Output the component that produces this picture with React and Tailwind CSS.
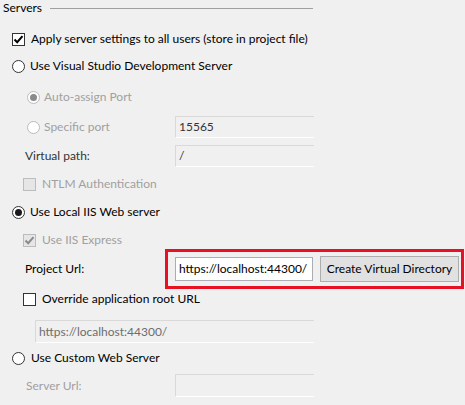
const font = { fontFamily: 'Lato, "Noto Sans", sans-serif' };

function Radio({ checked, disabled }) {
  return (
    <span
      className={`flex h-[13px] w-[13px] shrink-0 items-center justify-center rounded-full border bg-white ${
        disabled ? 'border-[#bcbcbc] bg-[#f0f0f0]' : 'border-[#333333]'
      }`}
    >
      {checked && (
        <span className={`h-[7px] w-[7px] rounded-full ${disabled ? 'bg-[#8a8a8a]' : 'bg-[#1a1a1a]'}`} />
      )}
    </span>
  );
}

function Check({ checked, disabled }) {
  return (
    <span
      className={`flex h-[13px] w-[13px] shrink-0 items-center justify-center border ${
        disabled ? 'border-[#bcbcbc] bg-[#e6e6e6]' : 'border-[#333333] bg-white'
      }`}
    >
      {checked && (
        <svg width="11" height="11" viewBox="0 0 11 11">
          <polyline
            points="1.5,5.5 4.2,8.2 9.5,2.2"
            fill="none"
            stroke={disabled ? '#8a8a8a' : '#000'}
            strokeWidth="2"
          />
        </svg>
      )}
    </span>
  );
}

function TextBox({ value, disabled, className = '' }) {
  return (
    <div
      className={`flex items-center border border-r-0 border-[#d9d9d9] border-b-white bg-[#f0f0f0] pl-[3px] text-[12px] ${
        disabled ? 'text-[#6d6d6d]' : 'text-[#333]'
      } ${className}`}
    >
      {value}
    </div>
  );
}

export default function App() {
  return (
    <div className="h-[405px] w-[465px] overflow-hidden bg-[#f0f0f0] text-[12px] text-black" style={font}>
      {/* HEADER */}
      <div className="flex h-4 items-center">
        <span className="pl-[3px]">Servers</span>
        <div className="ml-[8px] h-px w-[263px] bg-[#a0a0a0]" />
      </div>

      <div className="mt-[15px] flex h-4 items-center gap-[6px] pl-[12px]">
        <Check checked />
        <span>Apply server settings to all users (store in project file)</span>
      </div>

      <div className="mt-[11px] flex h-4 items-center gap-[5px] pl-[12px]">
        <Radio />
        <span>Use Visual Studio Development Server</span>
      </div>

      <div className="mt-[15px] flex h-4 items-center gap-[4px] pl-[27px] text-[#a0a0a0]">
        <Radio checked disabled />
        <span>Auto-assign Port</span>
      </div>

      <div className="mt-[11px] flex h-[22px] items-center">
        <div className="flex w-[175px] items-center gap-[4px] pl-[27px] text-[#a0a0a0]">
          <Radio disabled />
          <span>Specific port</span>
        </div>
        <TextBox value="15565" className="h-[22px] w-[139px]" />
      </div>

      <div className="mt-[7px] flex h-[22px] items-center">
        <div className="w-[175px] pl-[25px] text-[#333]">Virtual path:</div>
        <TextBox value="/" className="h-[22px] w-[139px]" />
      </div>

      <div className="mt-[9px] flex h-4 items-center gap-[6px] pl-[23px] text-[#a0a0a0]">
        <Check disabled />
        <span>NTLM Authentication</span>
      </div>

      <div className="mt-[12px] flex h-4 items-center gap-[5px] pl-[12px]">
        <Radio checked />
        <span>Use Local IIS Web server</span>
      </div>

      <div className="mt-[12px] flex h-4 items-center gap-[6px] pl-[23px] text-[#a0a0a0]">
        <Check checked disabled />
        <span>Use IIS Express</span>
      </div>

      {/* PROJECT URL */}
      <div className="mt-px flex h-10 items-center">
        <div className="w-[165px] pl-[25px]">Project Url:</div>
        <div className="flex h-10 w-[299px] items-center border-[3px] border-[#e81123] pl-[7px]">
          <div className="flex h-6 w-[138px] items-center border border-[#abadb3] bg-white pl-[3px]">
            https://localhost:44300/
          </div>
          <button className="ml-[7px] h-[26px] w-[139px] border border-[#adadad] bg-[#e1e1e1] text-[12px]">
            Create Virtual Directory
          </button>
        </div>
      </div>

      <div className="mt-[2px] flex h-4 items-center gap-[6px] pl-[23px]">
        <Check />
        <span>Override application root URL</span>
      </div>

      <div className="mt-[13px] pl-[35px]">
        <TextBox value="https://localhost:44300/" disabled className="h-[23px] w-[279px]" />
      </div>

      <div className="mt-[7px] flex h-4 items-center gap-[6px] pl-[12px]">
        <Radio />
        <span>Use Custom Web Server</span>
      </div>

      <div className="mt-[8px] flex h-[23px] items-center">
        <div className="w-[175px] pl-[26px] text-[#a0a0a0]">Server Url:</div>
        <TextBox value="" disabled className="h-[23px] w-[139px]" />
      </div>
    </div>
  );
}
